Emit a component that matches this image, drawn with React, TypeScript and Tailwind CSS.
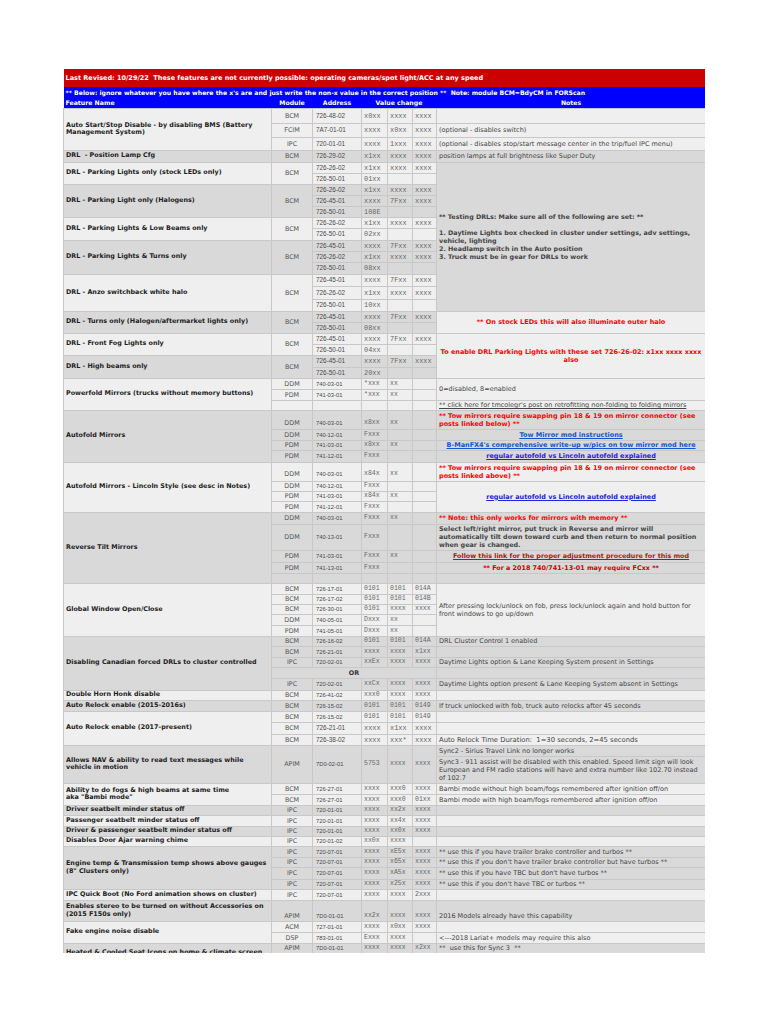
import React from 'react';

// row shades used by the sheet
const LT = 'bg-[#efefef]';
const DK = 'bg-[#d9d9d9]';
const bd = 'border border-[#c8c8c8]';

type CellProps = {
  children?: React.ReactNode;
  rs?: number;
  cs?: number;
  bg: string;
  className?: string;
};

const Feat = ({ children, rs, bg, className = '' }: CellProps) => (
  <td
    rowSpan={rs}
    className={`${bd} ${bg} px-[2px] align-middle whitespace-nowrap overflow-hidden font-bold text-[6.4px] leading-[7.5px] text-[#222] ${className}`}
  >
    {children}
  </td>
);

const Mod = ({ children, rs, bg, className = '' }: CellProps) => (
  <td
    rowSpan={rs}
    className={`${bd} ${bg} text-center align-middle whitespace-nowrap text-[6.4px] leading-[8px] text-[#555] ${className}`}
  >
    {children}
  </td>
);

const Note = ({ children, rs, bg, className = '' }: CellProps) => (
  <td
    rowSpan={rs}
    className={`${bd} ${bg} px-[2px] align-middle whitespace-nowrap overflow-hidden text-[6.5px] leading-[8px] text-[#444] ${className}`}
  >
    {children}
  </td>
);

type AVProps = {
  bg: string;
  a?: string;
  v?: string[];
  big?: boolean;
  rs?: number;
  al?: string;
};

// address + the three value columns
const AV = ({ bg, a = '', v = [], big, rs, al = 'align-middle' }: AVProps) => (
  <>
    <td
      rowSpan={rs}
      className={`${bd} ${bg} ${al} pl-[3px] whitespace-nowrap font-['Liberation_Sans',Arial,sans-serif] leading-[8px] text-[#4a4a4a] ${
        big ? 'text-[6.4px]' : 'text-[5.8px]'
      }`}
    >
      {a}
    </td>
    {[0, 1, 2].map((i) => (
      <td
        key={i}
        rowSpan={rs}
        className={`${bd} ${bg} ${al} pl-[2px] whitespace-nowrap overflow-hidden font-['Liberation_Mono',monospace] leading-[8px] text-[#666] ${
          big ? 'text-[6.9px]' : 'text-[6.5px]'
        }`}
      >
        {v[i]}
      </td>
    ))}
  </>
);

const RED = 'text-[#ff0000] font-bold';
const LINK = 'font-bold underline text-[#1155cc] text-center text-[6.3px]';

export default function App() {
  return (
    <div className="min-h-[1024px] bg-white pt-[69px] pl-[63px] font-['DejaVu_Sans',Verdana,sans-serif]">
      <div className="w-[642px] h-[884px] overflow-hidden">
        <table className="table-fixed border-collapse w-[642px]">
          <colgroup>
            <col className="w-[208px]" />
            <col className="w-[41px]" />
            <col className="w-[49px]" />
            <col className="w-[26px]" />
            <col className="w-[25px]" />
            <col className="w-[24px]" />
            <col className="w-[269px]" />
          </colgroup>
          <tbody>
            <tr className="h-[18px]">
              <td colSpan={7} className="bg-[#cc0000] px-[2px] align-middle whitespace-pre text-white font-bold text-[6.5px] leading-[8px]">
                Last Revised: 10/29/22  These features are not currently possible: operating cameras/spot light/ACC at any speed
              </td>
            </tr>
            <tr className="h-[11px]">
              <td colSpan={7} className="bg-[#0000ff] px-[2px] align-middle whitespace-pre text-white font-bold text-[6.15px] leading-[8px]">
                ** Below: ignore whatever you have where the x's are and just write the non-x value in the correct position **  Note: module BCM=BdyCM in FORScan
              </td>
            </tr>
            <tr className="h-[10px] bg-[#0000ff] text-white font-bold text-[6.2px] leading-[8px]">
              <td className="px-[2px] align-middle">Feature Name</td>
              <td className="text-center align-middle">Module</td>
              <td className="text-center align-middle">Address</td>
              <td colSpan={3} className="text-center align-middle">Value change</td>
              <td className="text-center align-middle">Notes</td>
            </tr>

            {/* Auto Start/Stop */}
            <tr className="h-[15px]">
              <Feat rs={3} bg={LT}>
                Auto Start/Stop Disable - by disabling BMS (Battery
                <br />
                Management System)
              </Feat>
              <Mod bg={LT}>BCM</Mod>
              <AV bg={LT} big a="726-48-02" v={['x0xx', 'xxxx', 'xxxx']} />
              <Note bg={LT} />
            </tr>
            <tr className="h-[14px]">
              <Mod bg={LT}>FCIM</Mod>
              <AV bg={LT} big a="7A7-01-01" v={['xxxx', 'x0xx', 'xxxx']} />
              <Note bg={LT}>(optional - disables switch)</Note>
            </tr>
            <tr className="h-[13px]">
              <Mod bg={LT}>IPC</Mod>
              <AV bg={LT} big a="720-01-01" v={['xxxx', '1xxx', 'xxxx']} />
              <Note bg={LT}>(optional - disables stop/start message center in the trip/fuel IPC menu)</Note>
            </tr>

            {/* DRL position lamp */}
            <tr className="h-[12px]">
              <Feat bg={DK} className="whitespace-pre">DRL  - Position Lamp Cfg</Feat>
              <Mod bg={DK}>BCM</Mod>
              <AV bg={DK} big a="726-29-02" v={['x1xx', 'xxxx', 'xxxx']} />
              <Note bg={DK}>position lamps at full brightness like Super Duty</Note>
            </tr>

            {/* DRL parking lights stock */}
            <tr className="h-[11px]">
              <Feat rs={2} bg={LT}>DRL - Parking Lights only (stock LEDs only)</Feat>
              <Mod rs={2} bg={LT}>BCM</Mod>
              <AV bg={LT} big a="726-26-02" v={['x1xx', 'xxxx', 'xxxx']} />
              <Note rs={13} bg={DK} className="font-bold text-[#222] !text-[6.35px]">
                ** Testing DRLs: Make sure all of the following are set: **
                <br />
                <br />
                1. Daytime Lights box checked in cluster under settings, adv settings,
                <br />
                vehicle, lighting
                <br />
                2. Headlamp switch in the Auto position
                <br />
                3. Truck must be in gear for DRLs to work
              </Note>
            </tr>
            <tr className="h-[11px]">
              <AV bg={LT} big a="726-50-01" v={['01xx']} />
            </tr>

            {/* Halogens */}
            <tr className="h-[11px]">
              <Feat rs={3} bg={DK}>DRL - Parking Light only (Halogens)</Feat>
              <Mod rs={3} bg={DK}>BCM</Mod>
              <AV bg={DK} big a="726-26-02" v={['x1xx', 'xxxx', 'xxxx']} />
            </tr>
            <tr className="h-[11px]">
              <AV bg={DK} big a="726-45-01" v={['xxxx', '7Fxx', 'xxxx']} />
            </tr>
            <tr className="h-[11px]">
              <AV bg={DK} big a="726-50-01" v={['108E']} />
            </tr>

            {/* Low beams */}
            <tr className="h-[11px]">
              <Feat rs={2} bg={LT}>DRL - Parking Lights &amp; Low Beams only</Feat>
              <Mod rs={2} bg={LT}>BCM</Mod>
              <AV bg={LT} big a="726-26-02" v={['x1xx', 'xxxx', 'xxxx']} />
            </tr>
            <tr className="h-[12px]">
              <AV bg={LT} big a="726-50-01" v={['02xx']} />
            </tr>

            {/* Turns */}
            <tr className="h-[11px]">
              <Feat rs={3} bg={DK}>DRL - Parking Lights &amp; Turns only</Feat>
              <Mod rs={3} bg={DK}>BCM</Mod>
              <AV bg={DK} big a="726-45-01" v={['xxxx', '7Fxx', 'xxxx']} />
            </tr>
            <tr className="h-[11px]">
              <AV bg={DK} big a="726-26-02" v={['x1xx', 'xxxx', 'xxxx']} />
            </tr>
            <tr className="h-[12px]">
              <AV bg={DK} big a="726-50-01" v={['08xx']} />
            </tr>

            {/* Anzo */}
            <tr className="h-[12px]">
              <Feat rs={3} bg={LT}>DRL - Anzo switchback white halo</Feat>
              <Mod rs={3} bg={LT}>BCM</Mod>
              <AV bg={LT} big a="726-45-01" v={['xxxx', '7Fxx', 'xxxx']} />
            </tr>
            <tr className="h-[13px]">
              <AV bg={LT} big a="726-26-02" v={['x1xx', 'xxxx', 'xxxx']} />
            </tr>
            <tr className="h-[12px]">
              <AV bg={LT} big a="726-50-01" v={['10xx']} />
            </tr>

            {/* Turns only */}
            <tr className="h-[11px]">
              <Feat rs={2} bg={DK}>DRL - Turns only (Halogen/aftermarket lights only)</Feat>
              <Mod rs={2} bg={DK}>BCM</Mod>
              <AV bg={DK} big a="726-45-01" v={['xxxx', '7Fxx', 'xxxx']} />
              <Note rs={2} bg={LT} className={`${RED} text-center`}>
                ** On stock LEDs this will also illuminate outer halo
              </Note>
            </tr>
            <tr className="h-[11px]">
              <AV bg={DK} big a="726-50-01" v={['08xx']} />
            </tr>

            {/* Front fog */}
            <tr className="h-[11px]">
              <Feat rs={2} bg={LT}>DRL - Front Fog Lights only</Feat>
              <Mod rs={2} bg={LT}>BCM</Mod>
              <AV bg={LT} big a="726-45-01" v={['xxxx', '7Fxx', 'xxxx']} />
              <Note rs={4} bg={LT} className={`${RED} text-center`}>
                To enable DRL Parking Lights with these set 726-26-02: x1xx xxxx xxxx
                <br />
                also
              </Note>
            </tr>
            <tr className="h-[11px]">
              <AV bg={LT} big a="726-50-01" v={['04xx']} />
            </tr>

            {/* High beams */}
            <tr className="h-[12px]">
              <Feat rs={2} bg={DK}>DRL - High beams only</Feat>
              <Mod rs={2} bg={DK}>BCM</Mod>
              <AV bg={DK} big a="726-45-01" v={['xxxx', '7Fxx', 'xxxx']} />
            </tr>
            <tr className="h-[11px]">
              <AV bg={DK} big a="726-50-01" v={['20xx']} />
            </tr>

            {/* Powerfold */}
            <tr className="h-[11px]">
              <Feat rs={3} bg={LT}>Powerfold Mirrors (trucks without memory buttons)</Feat>
              <Mod bg={LT}>DDM</Mod>
              <AV bg={LT} a="740-03-01" v={['*xxx', 'xx']} />
              <Note rs={2} bg={LT} className="text-[#333]">0=disabled, 8=enabled</Note>
            </tr>
            <tr className="h-[11px]">
              <Mod bg={LT}>PDM</Mod>
              <AV bg={LT} a="741-03-01" v={['*xxx', 'xx']} />
            </tr>
            <tr className="h-[10px]">
              <Mod bg={LT} />
              <AV bg={LT} />
              <Note bg={LT} className="underline text-[#3d85c6]">
                ** click here for tmcolegr's post on retrofitting non-folding to folding mirrors
              </Note>
            </tr>

            {/* Autofold */}
            <tr className="h-[19px]">
              <Feat rs={4} bg={DK}>Autofold Mirrors</Feat>
              <Mod bg={DK} className="!align-bottom pb-[2px]">DDM</Mod>
              <AV bg={DK} al="align-bottom pb-[2px]" a="740-03-01" v={['x8xx', 'xx']} />
              <Note bg={DK} className={RED}>
                ** Tow mirrors require swapping pin 18 &amp; 19 on mirror connector (see
                <br />
                posts linked below) **
              </Note>
            </tr>
            <tr className="h-[11px]">
              <Mod bg={DK}>DDM</Mod>
              <AV bg={DK} a="740-12-01" v={['Fxxx']} />
              <Note bg={DK} className={LINK}>Tow Mirror mod instructions</Note>
            </tr>
            <tr className="h-[10px]">
              <Mod bg={DK}>PDM</Mod>
              <AV bg={DK} a="741-03-01" v={['x8xx', 'xx']} />
              <Note bg={DK} className={LINK}>B-ManFX4's comprehensive write-up w/pics on tow mirror mod here</Note>
            </tr>
            <tr className="h-[12px]">
              <Mod bg={DK}>PDM</Mod>
              <AV bg={DK} a="741-12-01" v={['Fxxx']} />
              <Note bg={DK} className="font-bold underline text-[#2222dd] text-center text-[6.3px]">
                regular autofold vs Lincoln autofold explained
              </Note>
            </tr>

            {/* Autofold Lincoln */}
            <tr className="h-[19px]">
              <Feat rs={4} bg={LT}>Autofold Mirrors - Lincoln Style (see desc in Notes)</Feat>
              <Mod bg={LT} className="!align-bottom pb-[3px]">DDM</Mod>
              <AV bg={LT} al="align-bottom pb-[3px]" a="740-03-01" v={['x84x', 'xx']} />
              <Note bg={LT} className={RED}>
                ** Tow mirrors require swapping pin 18 &amp; 19 on mirror connector (see
                <br />
                posts linked above) **
              </Note>
            </tr>
            <tr className="h-[10px]">
              <Mod bg={LT}>DDM</Mod>
              <AV bg={LT} a="740-12-01" v={['Fxxx']} />
              <Note rs={3} bg={LT} className="font-bold underline text-[#2222dd] text-center text-[6.3px]">
                regular autofold vs Lincoln autofold explained
              </Note>
            </tr>
            <tr className="h-[10px]">
              <Mod bg={LT}>PDM</Mod>
              <AV bg={LT} a="741-03-01" v={['x84x', 'xx']} />
            </tr>
            <tr className="h-[11px]">
              <Mod bg={LT}>PDM</Mod>
              <AV bg={LT} a="741-12-01" v={['Fxxx']} />
            </tr>

            {/* Reverse tilt */}
            <tr className="h-[12px]">
              <Feat rs={5} bg={DK}>Reverse Tilt Mirrors</Feat>
              <Mod bg={DK}>DDM</Mod>
              <AV bg={DK} a="740-03-01" v={['Fxxx', 'xx']} />
              <Note bg={DK} className={RED}>** Note: this only works for mirrors with memory **</Note>
            </tr>
            <tr className="h-[26px]">
              <Mod bg={DK}>DDM</Mod>
              <AV bg={DK} a="740-13-01" v={['Fxxx']} />
              <Note bg={DK} className="font-bold text-[#222] !text-[6.4px]">
                Select left/right mirror, put truck in Reverse and mirror will
                <br />
                automatically tilt down toward curb and then return to normal position
                <br />
                when gear is changed.
              </Note>
            </tr>
            <tr className="h-[12px]">
              <Mod bg={DK}>PDM</Mod>
              <AV bg={DK} a="741-03-01" v={['Fxxx', 'xx']} />
              <Note bg={DK} className="font-bold underline text-[#a61c00] text-center !text-[6.4px]">
                Follow this link for the proper adjustment procedure for this mod
              </Note>
            </tr>
            <tr className="h-[11px]">
              <Mod bg={DK}>PDM</Mod>
              <AV bg={DK} a="741-13-01" v={['Fxxx']} />
              <Note bg={DK} className="font-bold text-[#cc0000] text-center !text-[6.4px]">
                ** For a 2018 740/741-13-01 may require FCxx **
              </Note>
            </tr>
            <tr className="h-[10px]">
              <Mod bg={DK} />
              <AV bg={DK} />
              <Note bg={DK} />
            </tr>

            {/* Global window */}
            <tr className="h-[11px]">
              <Feat rs={5} bg={LT}>Global Window Open/Close</Feat>
              <Mod bg={LT}>BCM</Mod>
              <AV bg={LT} a="726-17-01" v={['0101', '0101', '014A']} />
              <Note rs={5} bg={LT}>
                After pressing lock/unlock on fob, press lock/unlock again and hold button for
                <br />
                front windows to go up/down
              </Note>
            </tr>
            <tr className="h-[10px]">
              <Mod bg={LT}>BCM</Mod>
              <AV bg={LT} a="726-17-02" v={['0101', '0101', '014B']} />
            </tr>
            <tr className="h-[10px]">
              <Mod bg={LT}>BCM</Mod>
              <AV bg={LT} a="726-30-01" v={['0101', 'xxxx', 'xxxx']} />
            </tr>
            <tr className="h-[11px]">
              <Mod bg={LT}>DDM</Mod>
              <AV bg={LT} a="740-05-01" v={['Dxxx', 'xx']} />
            </tr>
            <tr className="h-[11px]">
              <Mod bg={LT}>PDM</Mod>
              <AV bg={LT} a="741-05-01" v={['Dxxx', 'xx']} />
            </tr>

            {/* Canadian DRLs */}
            <tr className="h-[10px]">
              <Feat rs={5} bg={DK}>Disabling Canadian forced DRLs to cluster controlled</Feat>
              <Mod bg={DK}>BCM</Mod>
              <AV bg={DK} a="726-16-02" v={['0101', '0101', '014A']} />
              <Note bg={DK}>DRL Cluster Control 1 enabled</Note>
            </tr>
            <tr className="h-[11px]">
              <Mod bg={DK}>BCM</Mod>
              <AV bg={DK} a="726-21-01" v={['xxxx', 'xxxx', 'x1xx']} />
              <Note bg={DK} />
            </tr>
            <tr className="h-[10px]">
              <Mod bg={DK}>IPC</Mod>
              <AV bg={DK} a="720-02-01" v={['xxEx', 'xxxx', 'xxxx']} />
              <Note bg={DK}>Daytime Lights option &amp; Lane Keeping System present in Settings</Note>
            </tr>
            <tr className="h-[11px]">
              <td colSpan={5} className={`${bd} ${DK} text-center align-middle font-bold text-[6.4px] leading-[8px] text-[#333]`}>
                OR
              </td>
              <Note bg={DK} />
            </tr>
            <tr className="h-[12px]">
              <Mod bg={DK}>IPC</Mod>
              <AV bg={DK} a="720-02-01" v={['xxCx', 'xxxx', 'xxxx']} />
              <Note bg={DK}>Daytime Lights option present &amp; Lane Keeping System absent in Settings</Note>
            </tr>

            {/* Double horn */}
            <tr className="h-[10px]">
              <Feat bg={LT}>Double Horn Honk disable</Feat>
              <Mod bg={LT}>BCM</Mod>
              <AV bg={LT} a="726-41-02" v={['xxx0', 'xxxx', 'xxxx']} />
              <Note bg={LT} />
            </tr>

            {/* Auto relock 2015 */}
            <tr className="h-[11px]">
              <Feat bg={DK}>Auto Relock enable (2015-2016s)</Feat>
              <Mod bg={DK}>BCM</Mod>
              <AV bg={DK} a="726-15-02" v={['0101', '0101', '0149']} />
              <Note bg={DK}>If truck unlocked with fob, truck auto relocks after 45 seconds</Note>
            </tr>

            {/* Auto relock 2017 */}
            <tr className="h-[11px]">
              <Feat rs={3} bg={LT}>Auto Relock enable (2017-present)</Feat>
              <Mod bg={LT}>BCM</Mod>
              <AV bg={LT} a="726-15-02" v={['0101', '0101', '0149']} />
              <Note bg={LT} />
            </tr>
            <tr className="h-[12px]">
              <Mod bg={LT}>BCM</Mod>
              <AV bg={LT} big a="726-21-01" v={['xxxx', 'x1xx', 'xxxx']} />
              <Note bg={LT} />
            </tr>
            <tr className="h-[11px]">
              <Mod bg={LT}>BCM</Mod>
              <AV bg={LT} big a="726-38-02" v={['xxxx', 'xxx*', 'xxxx']} />
              <Note bg={LT} className="whitespace-pre !text-[6.8px] text-[#333]">
                Auto Relock Time Duration:  1=30 seconds, 2=45 seconds
              </Note>
            </tr>

            {/* NAV */}
            <tr className="h-[11px]">
              <Feat rs={2} bg={DK}>
                Allows NAV &amp; ability to read text messages while
                <br />
                vehicle in motion
              </Feat>
              <Mod rs={2} bg={DK}>APIM</Mod>
              <AV bg={DK} rs={2} a="7D0-02-01" v={['5753', 'xxxx', 'xxxx']} />
              <Note bg={DK}>Sync2 - Sirius Travel Link no longer works</Note>
            </tr>
            <tr className="h-[27px]">
              <Note bg={DK}>
                Sync3 - 911 assist will be disabled with this enabled. Speed limit sign will look
                <br />
                European and FM radio stations will have and extra number like 102.70 instead
                <br />
                of 102.7
              </Note>
            </tr>

            {/* Bambi */}
            <tr className="h-[11px]">
              <Feat rs={2} bg={LT}>
                Ability to do fogs &amp; high beams at same time
                <br />
                aka "Bambi mode"
              </Feat>
              <Mod bg={LT}>BCM</Mod>
              <AV bg={LT} a="726-27-01" v={['xxxx', 'xxx0', 'xxxx']} />
              <Note bg={LT}>Bambi mode without high beam/fogs remembered after ignition off/on</Note>
            </tr>
            <tr className="h-[11px]">
              <Mod bg={LT}>BCM</Mod>
              <AV bg={LT} a="726-27-01" v={['xxxx', 'xxx0', '01xx']} />
              <Note bg={LT}>Bambi mode with high beam/fogs remembered after ignition off/on</Note>
            </tr>

            {/* seatbelts / door */}
            <tr className="h-[10px]">
              <Feat bg={DK}>Driver seatbelt minder status off</Feat>
              <Mod bg={DK}>IPC</Mod>
              <AV bg={DK} a="720-01-01" v={['xxxx', 'xx2x', 'xxxx']} />
              <Note bg={DK} />
            </tr>
            <tr className="h-[11px]">
              <Feat bg={LT}>Passenger seatbelt minder status off</Feat>
              <Mod bg={LT}>IPC</Mod>
              <AV bg={LT} a="720-01-01" v={['xxxx', 'xx4x', 'xxxx']} />
              <Note bg={LT} />
            </tr>
            <tr className="h-[10px]">
              <Feat bg={DK}>Driver &amp; passenger seatbelt minder status off</Feat>
              <Mod bg={DK}>IPC</Mod>
              <AV bg={DK} a="720-01-01" v={['xxxx', 'xx0x', 'xxxx']} />
              <Note bg={DK} />
            </tr>
            <tr className="h-[10px]">
              <Feat bg={LT}>Disables Door Ajar warning chime</Feat>
              <Mod bg={LT}>IPC</Mod>
              <AV bg={LT} a="720-01-02" v={['xx0x', 'xxxx']} />
              <Note bg={LT} />
            </tr>

            {/* Engine temp */}
            <tr className="h-[11px]">
              <Feat rs={4} bg={DK}>
                Engine temp &amp; Transmission temp shows above gauges
                <br />
                (8" Clusters only)
              </Feat>
              <Mod bg={DK}>IPC</Mod>
              <AV bg={DK} a="720-07-01" v={['xxxx', 'xE5x', 'xxxx']} />
              <Note bg={DK}>** use this if you have trailer brake controller and turbos **</Note>
            </tr>
            <tr className="h-[10px]">
              <Mod bg={DK}>IPC</Mod>
              <AV bg={DK} a="720-07-01" v={['xxxx', 'x65x', 'xxxx']} />
              <Note bg={DK}>** use this if you don't have trailer brake controller but have turbos **</Note>
            </tr>
            <tr className="h-[12px]">
              <Mod bg={DK}>IPC</Mod>
              <AV bg={DK} a="720-07-01" v={['xxxx', 'xA5x', 'xxxx']} />
              <Note bg={DK}>** use this if you have TBC but don't have turbos **</Note>
            </tr>
            <tr className="h-[10px]">
              <Mod bg={DK}>IPC</Mod>
              <AV bg={DK} a="720-07-01" v={['xxxx', 'x25x', 'xxxx']} />
              <Note bg={DK}>** use this if you don't have TBC or turbos **</Note>
            </tr>

            {/* Quick boot */}
            <tr className="h-[11px]">
              <Feat bg={LT}>IPC Quick Boot (No Ford animation shows on cluster)</Feat>
              <Mod bg={LT}>IPC</Mod>
              <AV bg={LT} a="720-07-01" v={['xxxx', 'xxxx', '2xxx']} />
              <Note bg={LT} />
            </tr>

            {/* Stereo */}
            <tr className="h-[21px]">
              <Feat bg={DK}>
                Enables stereo to be turned on without Accessories on
                <br />
                (2015 F150s only)
              </Feat>
              <Mod bg={DK} className="!align-bottom pb-[1px]">APIM</Mod>
              <AV bg={DK} al="align-bottom pb-[1px]" a="7D0-01-01" v={['xx2x', 'xxxx', 'xxxx']} />
              <Note bg={DK} className="!align-bottom pb-[1px]">2016 Models already have this capability</Note>
            </tr>

            {/* Fake engine noise */}
            <tr className="h-[11px]">
              <Feat rs={2} bg={LT}>Fake engine noise disable</Feat>
              <Mod bg={LT}>ACM</Mod>
              <AV bg={LT} a="727-01-01" v={['xxxx', 'x0xx', 'xxxx']} />
              <Note bg={LT} />
            </tr>
            <tr className="h-[11px]">
              <Mod bg={LT}>DSP</Mod>
              <AV bg={LT} a="783-01-01" v={['Exxx', 'xxxx']} />
              <Note bg={LT}>&lt;---2018 Lariat+ models may require this also</Note>
            </tr>

            {/* Heated seats (cut off at the page edge) */}
            <tr className="h-[10px]">
              <Feat rs={2} bg={DK}>Heated &amp; Cooled Seat Icons on home &amp; climate screen</Feat>
              <Mod bg={DK}>APIM</Mod>
              <AV bg={DK} a="7D0-01-01" v={['xxxx', 'xxxx', 'x2xx']} />
              <Note bg={DK} className="whitespace-pre">**  use this for Sync 3  **</Note>
            </tr>
            <tr className="h-[10px]">
              <Mod bg={DK} />
              <AV bg={DK} />
              <Note bg={DK} />
            </tr>
          </tbody>
        </table>
      </div>
    </div>
  );
}
